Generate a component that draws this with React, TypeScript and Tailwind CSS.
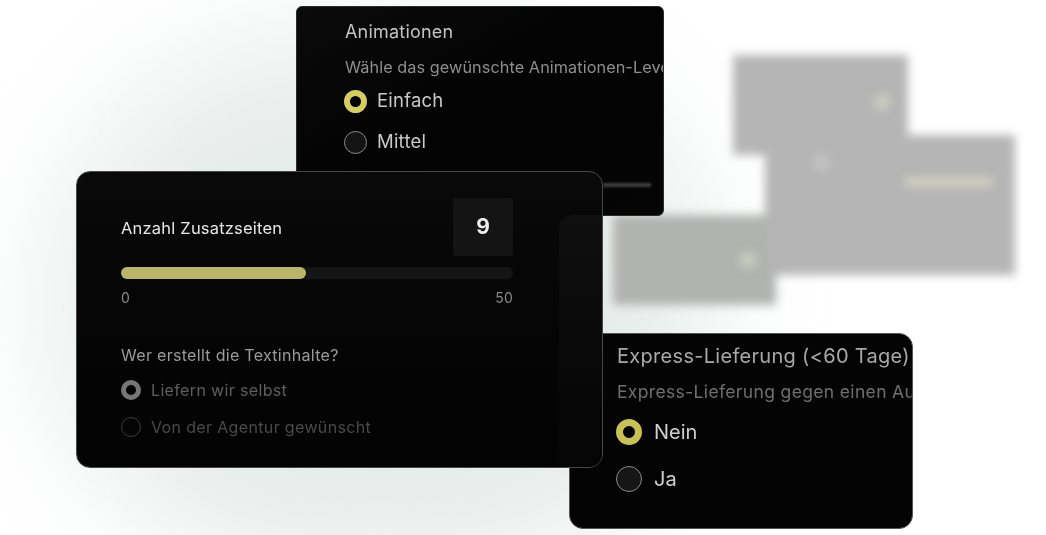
import * as React from "react";

const font = { fontFamily: "Inter, 'Noto Sans', sans-serif" };

interface RadioRowProps {
  label: string;
  selected?: boolean;
}

const TopRadio: React.FC<RadioRowProps> = ({ label, selected }) => (
  <div className="flex items-center gap-[10px] h-[24px]">
    <div
      className={
        selected
          ? "w-[23px] h-[23px] rounded-full border-[6px] border-[#d6ce5e] bg-black"
          : "w-[23px] h-[23px] rounded-full border border-[#8a8a8a] bg-[#141414]"
      }
    ></div>
    <div className="text-[18.5px] text-[#c9c9c9] tracking-[0.2px]">{label}</div>
  </div>
);

const BottomRadio: React.FC<RadioRowProps> = ({ label, selected }) => (
  <div className="flex items-center gap-[12px] h-[26px]">
    <div
      className={
        selected
          ? "w-[26px] h-[26px] rounded-full border-[7px] border-[#c9c155] bg-black"
          : "w-[26px] h-[26px] rounded-full border border-[#8a8a8a] bg-[#161616]"
      }
    ></div>
    <div className="text-[20px] text-[#d0d0d0]">{label}</div>
  </div>
);

const BlurredCards = () => (
  <>
    <div className="absolute left-[733px] top-[55px] w-[175px] h-[100px] bg-[#b5b5b5] blur-[5px]"></div>
    <div className="absolute left-[765px] top-[135px] w-[250px] h-[140px] bg-[#b5b5b5] blur-[5px]"></div>
    <div className="absolute left-[613px] top-[215px] w-[163px] h-[90px] bg-[#b1b3b1] blur-[5px]"></div>
    <div className="absolute left-[874px] top-[94px] w-[16px] h-[16px] rounded-full bg-[#cdcec0] blur-[5px]"></div>
    <div className="absolute left-[904px] top-[177px] w-[90px] h-[10px] rounded-full bg-[#cfcfc0] blur-[4px]"></div>
    <div className="absolute left-[812px] top-[154px] w-[18px] h-[18px] rounded-full bg-[#c2c2c2] blur-[5px]"></div>
    <div className="absolute left-[740px] top-[252px] w-[16px] h-[16px] rounded-full bg-[#cbcdbe] blur-[5px]"></div>
  </>
);

const App: React.FC = () => {
  return (
    <div
      className="relative w-[1046px] h-[535px] overflow-hidden bg-white"
      style={font}
    >
      {/* soft backdrop glow */}
      <div className="absolute left-[50px] top-[40px] w-[660px] h-[530px] rounded-full bg-[#e6ecea] blur-[60px]"></div>

      <BlurredCards />

      {/* Animationen */}
      <div className="absolute left-[296px] top-[6px] w-[368px] h-[210px] rounded-[6px] border border-[#2a2a2a] bg-gradient-to-br from-[#0b0b0b] via-[#030303] to-[#050505] overflow-hidden pl-[48px] pt-[12px] whitespace-nowrap blur-[0.4px]">
        <div className="text-[18px] leading-[26px] text-[#c4c4c4] tracking-[0.2px]">Animationen</div>
        <div className="mt-[10px] text-[16.3px] leading-[24px] text-[#8f8f8f] tracking-[0.05px]">
          Wähle das gewünschte Animationen-Level
        </div>
        <div className="mt-[10px] flex flex-col gap-[17px] -ml-[1px]">
          <TopRadio label="Einfach" selected />
          <TopRadio label="Mittel" />
        </div>
        <div className="absolute left-[306px] top-[176px] w-[48px] h-[4px] bg-[#3c3c3c] blur-[1px]"></div>
      </div>

      {/* Express-Lieferung */}
      <div className="absolute left-[569px] top-[333px] w-[344px] h-[196px] rounded-[14px] border border-[#555555] bg-[#040404] overflow-hidden pl-[47px] pt-[8px] whitespace-nowrap blur-[0.4px]">
        <div className="text-[20px] leading-[28px] text-[#a8a8a8] tracking-[0.3px]">Express-Lieferung (&lt;60 Tage)</div>
        <div className="mt-[9px] text-[17.5px] leading-[26px] text-[#6f6f6f] tracking-[0.35px]">
          Express-Lieferung gegen einen Aufpreis
        </div>
        <div className="mt-[14px] -ml-[1px] flex flex-col gap-[21px]">
          <BottomRadio label="Nein" selected />
          <BottomRadio label="Ja" />
        </div>
      </div>

      {/* Anzahl Zusatzseiten */}
      <div className="absolute left-[76px] top-[171px] w-[527px] h-[297px] rounded-[14px] border border-[#484848] bg-gradient-to-b from-[#090909] to-[#030303] overflow-hidden pl-[44px] pr-[89px] pt-[26px] blur-[0.4px]">
        <div className="absolute right-0 top-[43px] w-[43px] h-[254px] rounded-tl-[14px] bg-gradient-to-b from-[#0f0f0f] to-[#050505]"></div>
        <div className="flex items-center justify-between h-[58px]">
          <div className="text-[16.5px] text-[#e8e8e8] tracking-[0.2px] pt-[2px]">Anzahl Zusatzseiten</div>
          <div className="w-[60px] h-[58px] rounded-[3px] bg-[#141414] flex items-center justify-center text-[21px] font-bold text-[#ededed]">
            9
          </div>
        </div>
        <div className="mt-[11px] h-[12px] rounded-full bg-[#151515]">
          <div className="w-[185px] h-[12px] rounded-full bg-[#bab568]"></div>
        </div>
        <div className="mt-[9px] flex justify-between text-[14px] leading-[20px] text-[#8a8a8a] tracking-[0.2px]">
          <div>0</div>
          <div>50</div>
        </div>
        <div className="mt-[35px] text-[16px] leading-[24px] text-[#9a9a9a] tracking-[0.3px]">Wer erstellt die Textinhalte?</div>
        <div className="mt-[13px] flex flex-col gap-[17px]">
          <div className="flex items-center gap-[10px] h-[20px]">
            <div className="w-[20px] h-[20px] rounded-full border-[5px] border-[#767676] bg-black"></div>
            <div className="text-[16px] text-[#5f5f5f] tracking-[0.35px]">Liefern wir selbst</div>
          </div>
          <div className="flex items-center gap-[10px] h-[20px]">
            <div className="w-[20px] h-[20px] rounded-full border border-[#3c3c3c] bg-[#050505]"></div>
            <div className="text-[16px] text-[#4a4a4a] tracking-[0.35px]">Von der Agentur gewünscht</div>
          </div>
        </div>
      </div>
    </div>
  );
};

export default App;
